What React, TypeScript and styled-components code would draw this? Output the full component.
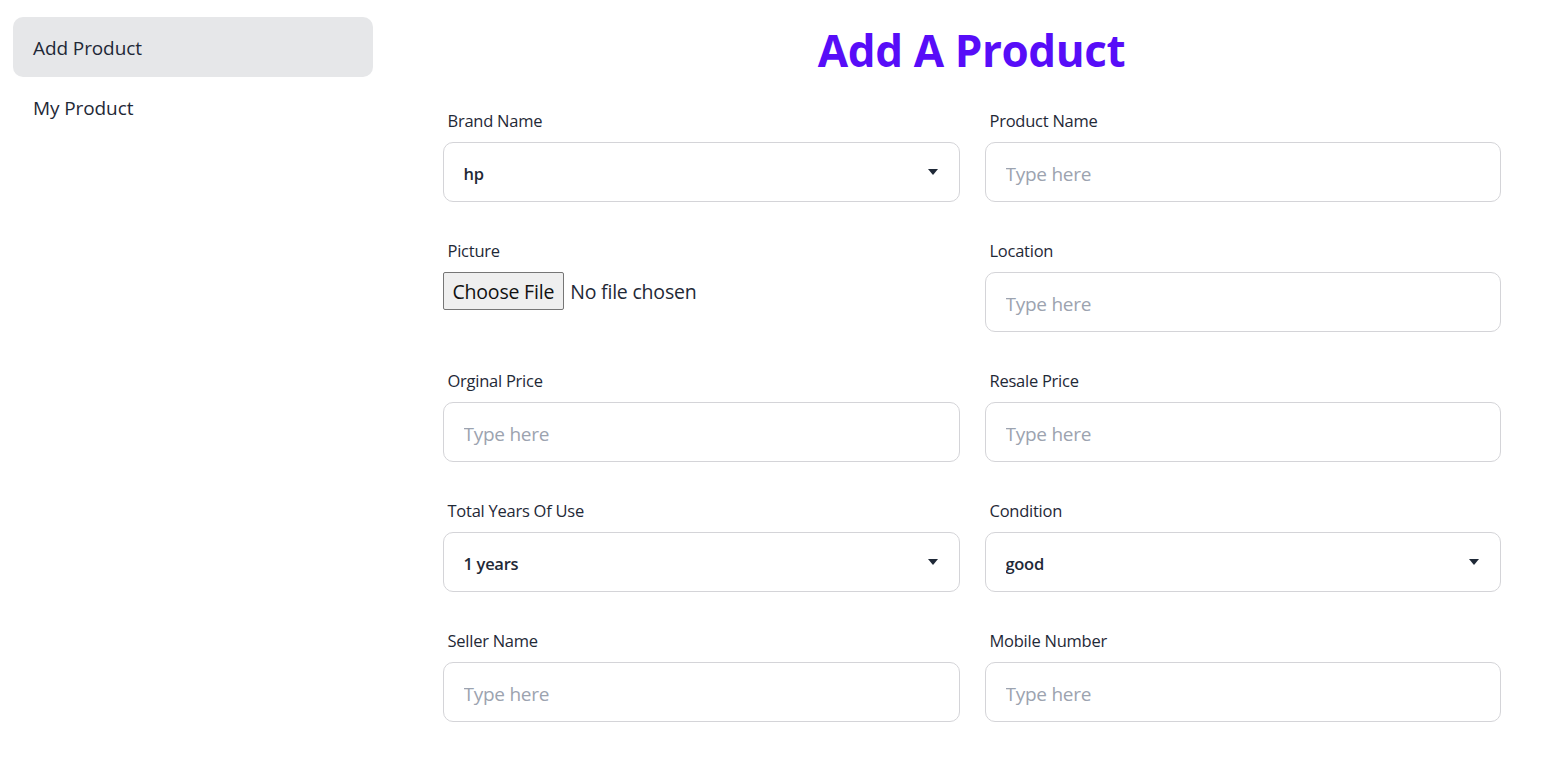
import React from "react";
import styled, { createGlobalStyle } from "styled-components";

const Global = createGlobalStyle`
  html, body { margin: 0; padding: 0; background: #ffffff; }
  body { font-family: "Open Sans", "Noto Sans", sans-serif; color: #1f2937; }
  * { box-sizing: border-box; }
`;

const Layout = styled.div`
  display: flex;
  min-height: 762px;
`;

const Sidebar = styled.aside`
  width: 396px;
  flex-shrink: 0;
  padding: 17px 0 0 13px;
`;

const Menu = styled.ul`
  list-style: none;
  margin: 0;
  padding: 0;
  display: flex;
  flex-direction: column;
  gap: 0px;
`;

const MenuItem = styled.li<{ $active?: boolean }>`
  width: 360px;
  height: 60px;
  display: flex;
  align-items: center;
  padding: 1px 0 0 20px;
  border-radius: 10px;
  font-size: 19px;
  letter-spacing: -0.1px;
  color: #1f2937;
  background: ${(p) => (p.$active ? "#e6e7e9" : "transparent")};
`;

const Main = styled.main`
  flex: 1;
  padding-top: 22px;
  display: flex;
  flex-direction: column;
  align-items: center;
`;

const Title = styled.h1`
  margin: 0 0 19px;
  font-size: 44px;
  line-height: 56px;
  font-weight: 700;
  color: #570df8;
  letter-spacing: -0.4px;
`;

const Form = styled.form`
  width: 1058px;
  display: grid;
  grid-template-columns: 517px 516px;
  column-gap: 25px;
  row-gap: 25px;
`;

const Field = styled.div`
  display: flex;
  flex-direction: column;
`;

const Label = styled.label`
  height: 45px;
  display: flex;
  align-items: center;
  padding: 2px 5px 0;
  font-size: 16.5px;
  letter-spacing: -0.25px;
  color: #1f2937;
`;

const Input = styled.input`
  height: 60px;
  width: 100%;
  border: 1px solid #d4d4d8;
  border-radius: 10px;
  padding: 3px 20px 0;
  font-family: inherit;
  font-size: 19px;
  letter-spacing: -0.25px;
  color: #1f2937;
  background: #ffffff;
  outline: none;
  &::placeholder { color: #9ca3af; }
`;

const SelectWrap = styled.div`
  position: relative;
`;

const Select = styled.select`
  appearance: none;
  -webkit-appearance: none;
  height: 60px;
  width: 100%;
  border: 1px solid #d4d4d8;
  border-radius: 10px;
  padding: 2px 40px 0 20px;
  font-family: inherit;
  font-size: 16.5px;
  font-weight: 600;
  letter-spacing: -0.3px;
  color: #1f2937;
  background: #ffffff;
  outline: none;
`;

const Caret = styled.svg`
  position: absolute;
  right: 22px;
  top: 50%;
  transform: translateY(-50%);
  width: 10px;
  height: 6px;
  pointer-events: none;
`;

const FileRow = styled.div`
  height: 60px;
`;

const FileInput = styled.input`
  font-family: inherit;
  font-size: 19.5px;
  letter-spacing: -0.2px;
  color: #1f2937;
  height: 38px;
  &::file-selector-button {
    font-family: inherit;
    font-size: 19.5px;
    letter-spacing: -0.2px;
    height: 38px;
    padding: 0 9px;
    margin-right: 6px;
    background: #efefef;
    border: 1px solid #767676;
    border-radius: 2px;
    color: #111111;
  }
`;

const SelectField = ({ value, options }: { value: string; options: string[] }) => (
  <SelectWrap>
    <Select defaultValue={value}>
      {options.map((o) => (
        <option key={o}>{o}</option>
      ))}
    </Select>
    <Caret viewBox="0 0 10 6">
      <path d="M0 0 L10 0 L5 6 Z" fill="#1f2937" />
    </Caret>
  </SelectWrap>
);

export default function App() {
  return (
    <>
      <Global />
      <Layout>
        <Sidebar>
          <Menu>
            <MenuItem $active>Add Product</MenuItem>
            <MenuItem>My Product</MenuItem>
          </Menu>
        </Sidebar>
        <Main>
          <Title>Add A Product</Title>
          <Form>
            <Field>
              <Label>Brand Name</Label>
              <SelectField value="hp" options={["hp", "dell", "lenovo"]} />
            </Field>
            <Field>
              <Label>Product Name</Label>
              <Input placeholder="Type here" />
            </Field>
            <Field>
              <Label>Picture</Label>
              <FileRow>
                <FileInput type="file" />
              </FileRow>
            </Field>
            <Field>
              <Label>Location</Label>
              <Input placeholder="Type here" />
            </Field>
            <Field>
              <Label>Orginal Price</Label>
              <Input placeholder="Type here" />
            </Field>
            <Field>
              <Label>Resale Price</Label>
              <Input placeholder="Type here" />
            </Field>
            <Field>
              <Label>Total Years Of Use</Label>
              <SelectField value="1 years" options={["1 years", "2 years", "3 years"]} />
            </Field>
            <Field>
              <Label>Condition</Label>
              <SelectField value="good" options={["excellent", "good", "fair"]} />
            </Field>
            <Field>
              <Label>Seller Name</Label>
              <Input placeholder="Type here" />
            </Field>
            <Field>
              <Label>Mobile Number</Label>
              <Input placeholder="Type here" />
            </Field>
          </Form>
        </Main>
      </Layout>
    </>
  );
}
